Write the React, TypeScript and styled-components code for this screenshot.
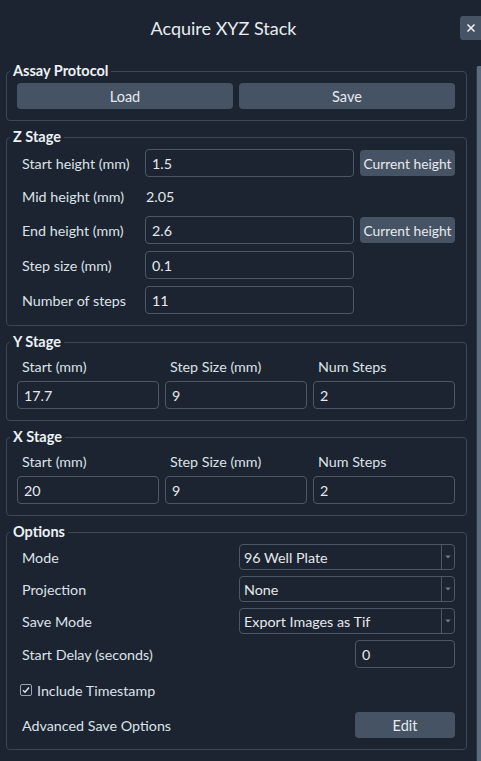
import React from "react";
import styled, { createGlobalStyle } from "styled-components";

const GlobalStyle = createGlobalStyle`
  html, body {
    margin: 0;
    padding: 0;
    background: #1b2430;
  }
  body {
    font-family: Lato, "Noto Sans", sans-serif;
    color: #e3e7ec;
  }
`;

const Window = styled.div`
  width: 481px;
  height: 761px;
  display: flex;
  flex-direction: column;
  overflow: hidden;
  background: #1b2430;
`;

const Header = styled.header`
  height: 56px;
  display: grid;
  grid-template-columns: 1fr 21px;
  align-items: center;
`;

const Title = styled.h1`
  margin: 0;
  padding-right: 13px;
  text-align: center;
  font-size: 18px;
  font-weight: 400;
  color: #e8ebef;
`;

const CloseButton = styled.button`
  width: 21px;
  height: 24px;
  padding: 0;
  border: none;
  border-radius: 3px 0 0 3px;
  background: #465364;
  color: #eef1f4;
  display: flex;
  align-items: center;
  justify-content: center;
`;

const Body = styled.div`
  flex: 1;
  display: flex;
  padding-top: 6px;
  min-height: 0;
`;

const Content = styled.div`
  width: 461px;
  margin-left: 6px;
  display: flex;
  flex-direction: column;
  gap: 7px;
`;

const Scrollbar = styled.div`
  width: 4px;
  margin-left: auto;
  margin-top: 4px;
  border-left: 1px solid #2c3643;
  border-radius: 2px 0 0 0;
  background: #5a6b7d;
`;

const Group = styled.fieldset`
  margin: 0;
  min-width: 0;
  padding: 3px 11px 11px 10px;
  border: 1px solid #3a4858;
  border-radius: 4px;
`;

const Legend = styled.legend`
  margin-left: -7px;
  padding: 0 3px;
  font-size: 14.5px;
  font-weight: 700;
  line-height: 18px;
  color: #eef1f4;
`;

const Button = styled.button<{ $width?: number; $small?: boolean }>`
  height: 26px;
  width: ${(p) => (p.$width ? `${p.$width}px` : "auto")};
  padding: 0;
  border: none;
  border-radius: 4px;
  background: #465364;
  color: #e6eaee;
  font-family: inherit;
  font-size: ${(p) => (p.$small ? "13.8px" : "14.5px")};
  white-space: nowrap;
  align-self: center;
  justify-self: end;
`;

const ButtonRow = styled.div`
  display: grid;
  grid-template-columns: 1fr 1fr;
  column-gap: 6px;

  & > ${Button} {
    justify-self: stretch;
  }
`;

const ZGrid = styled.div`
  display: grid;
  grid-template-columns: 122px 1fr 95px;
  grid-template-rows: 28px 25px 28px 28px 28px;
  column-gap: 6px;
  row-gap: 7px;
`;

const Label = styled.span`
  padding-left: 5px;
  font-size: 14.3px;
  align-self: center;
  white-space: nowrap;
  color: #dde2e8;
`;

const Value = styled.span`
  font-size: 14.3px;
  align-self: center;
  padding-left: 1px;
  color: #e3e7ec;
`;

const Field = styled.input<{ $width?: number }>`
  box-sizing: border-box;
  height: 28px;
  width: ${(p) => (p.$width ? `${p.$width}px` : "100%")};
  margin: 0;
  padding: 0 6px;
  border: 1px solid #4b5869;
  border-radius: 4px;
  background: #1b2430;
  color: #e6e9ed;
  font-family: inherit;
  font-size: 14.3px;
  outline: none;
  justify-self: end;
`;

const AxisGrid = styled.div`
  display: grid;
  grid-template-columns: repeat(3, 1fr);
  grid-template-rows: 24px 28px;
  column-gap: 6px;
  row-gap: 3px;
`;

const OptionsGrid = styled.div`
  display: grid;
  grid-template-columns: 1fr 216px;
  grid-template-rows: 26px 26px 26px 28px 32px 26px;
  row-gap: 6px;
`;

const Combo = styled.div`
  box-sizing: border-box;
  height: 26px;
  display: flex;
  align-items: center;
  border: 1px solid #4b5869;
  border-radius: 4px;
  font-size: 14.3px;
  color: #e6e9ed;
`;

const ComboText = styled.span`
  flex: 1;
  padding-left: 4px;
  white-space: nowrap;
`;

const ComboArrow = styled.span`
  width: 12px;
  height: 100%;
  border-left: 1px solid #4b5869;
  display: flex;
  align-items: center;
  justify-content: center;
`;

const CheckRow = styled.label`
  grid-column: 1 / -1;
  display: flex;
  align-items: center;
  gap: 5px;
  padding-left: 3px;
  font-size: 14.3px;
  color: #dde2e8;
`;

const Box = styled.span`
  box-sizing: border-box;
  width: 12px;
  height: 12px;
  border: 1px solid #9aa5b1;
  border-radius: 2px;
  display: flex;
  align-items: center;
  justify-content: center;
`;

const Select = ({ value }: { value: string }) => (
  <Combo>
    <ComboText>{value}</ComboText>
    <ComboArrow>
      <svg width="6" height="4" viewBox="0 0 6 4">
        <path d="M0 0.5h6L3 3.5z" fill="#6b7787" />
      </svg>
    </ComboArrow>
  </Combo>
);

const Axis = ({ title, start, step, steps }: { title: string; start: string; step: string; steps: string }) => (
  <Group>
    <Legend>{title}</Legend>
    <AxisGrid>
      <Label>Start (mm)</Label>
      <Label>Step Size (mm)</Label>
      <Label>Num Steps</Label>
      <Field defaultValue={start} />
      <Field defaultValue={step} />
      <Field defaultValue={steps} />
    </AxisGrid>
  </Group>
);

export default function App() {
  return (
    <Window>
      <GlobalStyle />
      <Header>
        <Title>Acquire XYZ Stack</Title>
        <CloseButton aria-label="Close">
          <svg width="10" height="10" viewBox="0 0 10 10">
            <path d="M1.5 1.5l7 7M8.5 1.5l-7 7" stroke="#eef1f4" strokeWidth="1.6" />
          </svg>
        </CloseButton>
      </Header>
      <Body>
        <Content>
          <Group>
            <Legend>Assay Protocol</Legend>
            <ButtonRow>
              <Button>Load</Button>
              <Button>Save</Button>
            </ButtonRow>
          </Group>

          <Group>
            <Legend>Z Stage</Legend>
            <ZGrid>
              <Label>Start height (mm)</Label>
              <Field defaultValue="1.5" />
              <Button $width={95} $small>Current height</Button>
              <Label>Mid height (mm)</Label>
              <Value>2.05</Value>
              <span />
              <Label>End height (mm)</Label>
              <Field defaultValue="2.6" />
              <Button $width={95} $small>Current height</Button>
              <Label>Step size (mm)</Label>
              <Field defaultValue="0.1" />
              <span />
              <Label>Number of steps</Label>
              <Field defaultValue="11" />
              <span />
            </ZGrid>
          </Group>

          <Axis title="Y Stage" start="17.7" step="9" steps="2" />
          <Axis title="X Stage" start="20" step="9" steps="2" />

          <Group>
            <Legend>Options</Legend>
            <OptionsGrid>
              <Label>Mode</Label>
              <Select value="96 Well Plate" />
              <Label>Projection</Label>
              <Select value="None" />
              <Label>Save Mode</Label>
              <Select value="Export Images as Tif" />
              <Label>Start Delay (seconds)</Label>
              <Field $width={100} defaultValue="0" />
              <CheckRow>
                <Box>
                  <svg width="8" height="8" viewBox="0 0 8 8">
                    <path d="M1 4.2l2 2L7 1.5" fill="none" stroke="#e6eaee" strokeWidth="1.4" />
                  </svg>
                </Box>
                Include Timestamp
              </CheckRow>
              <Label>Advanced Save Options</Label>
              <Button $width={100}>Edit</Button>
            </OptionsGrid>
          </Group>
        </Content>
        <Scrollbar />
      </Body>
    </Window>
  );
}
